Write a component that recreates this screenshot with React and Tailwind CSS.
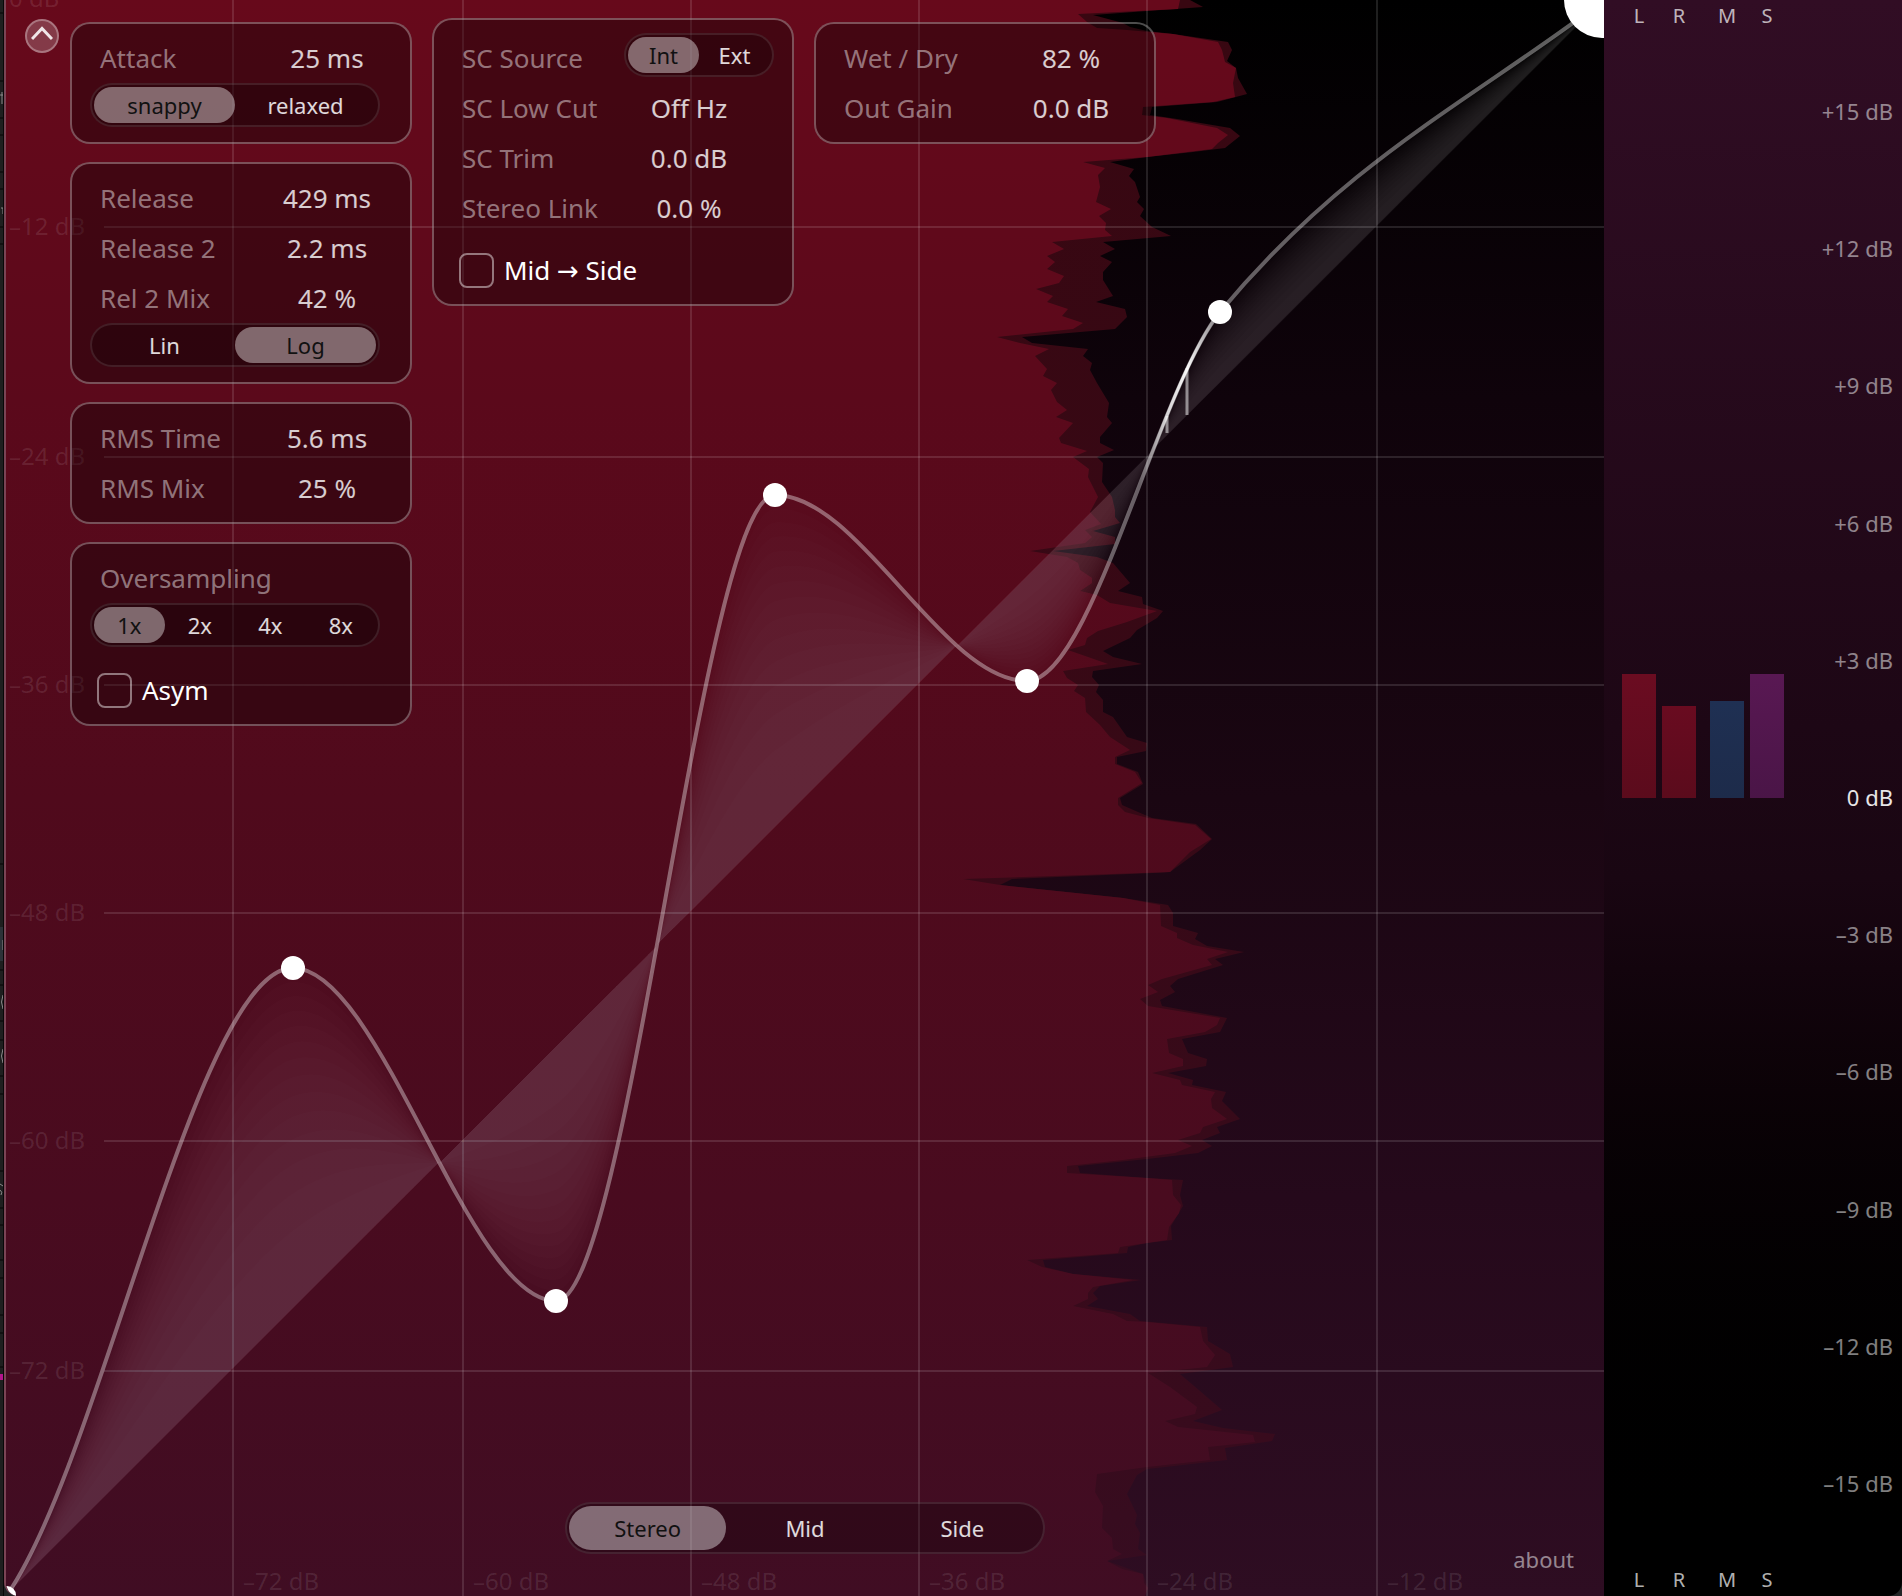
import { useState } from 'react'
import clsx from 'clsx'

const columns = [233, 463, 691, 919, 1147, 1377]
const rows = [227, 457, 685, 913, 1141, 1371]
const gridLabels = ['–12 dB', '–24 dB', '–36 dB', '–48 dB', '–60 dB', '–72 dB']

const curve =
  'M9 1592 C104 1450 198 968 293 968 C381 968 468 1301 556 1301 C629 1301 702 495 775 495 C859 495 943 681 1027 681 C1091 681 1156 392 1220 312 C1348 158 1476 98 1604 0'

// Copies of the curve pulled step by step towards the unity line y = 1602 - x,
// stacked so the fill grows denser the closer it gets to that line.
const FILL_STEPS = 14
const fillLayers = Array.from({ length: FILL_STEPS }, (_, i) => {
  const k = Math.pow(1 - i / FILL_STEPS, 1 / 1.8)
  return `matrix(1 ${k - 1} 0 ${k} 0 ${(1 - k) * 1602})`
})

const handles = [
  [293, 968],
  [556, 1301],
  [775, 495],
  [1027, 681],
  [1220, 312],
]

const rmsHistory =
  '1180,0 1178,9 1078,14 1087,22 1097,28 1127,30 1173,34 1218,42 1222,50 1225,62 1236,68 1233,83 1235,97 1213,102 1143,107 1142,115 1167,118 1217,128 1228,135 1218,143 1212,149 1147,157 1083,162 1105,168 1098,175 1100,187 1096,202 1111,209 1099,216 1106,223 1105,230 1112,236 1052,242 1064,249 1047,256 1055,262 1047,269 1064,276 1059,283 1036,289 1053,296 1047,302 1068,309 1062,316 1083,323 1073,329 997,337 1020,343 1049,349 1035,356 1047,369 1043,376 1057,383 1051,390 1057,402 ' +
  '1067,410 1056,417 1073,423 1059,438 1061,443 1087,451 1073,457 1089,469 1088,477 1098,497 1090,512 1101,524 1085,530 1092,537 1085,543 1030,551 1067,557 1078,563 1080,570 1092,578 1092,583 1080,591 1097,595 1110,603 1157,611 1127,622 1098,631 1087,638 1085,645 1068,650 1108,664 1063,671 1067,678 1078,685 1074,691 1085,698 1086,712 1100,725 1110,737 1130,750 1115,757 1115,764 1135,772 1142,783 1118,798 1118,805 1125,812 1148,818 1195,825 1211,839 1190,852 1170,872 1083,875 963,879 1000,885 ' +
  '1123,898 1160,905 1161,926 1177,933 1177,938 1193,945 1228,952 1207,959 1212,965 1162,979 1148,985 1158,992 1140,999 1148,1006 1220,1018 1217,1025 1205,1032 1167,1039 1169,1053 1183,1059 1183,1066 1152,1073 1180,1080 1182,1085 1215,1092 1211,1099 1212,1108 1227,1119 1203,1127 1200,1133 1178,1140 1192,1146 1175,1153 1123,1160 1067,1166 1067,1173 1147,1178 1172,1180 1173,1195 1181,1205 1179,1213 1169,1227 1167,1240 1120,1247 1118,1253 1027,1260 1042,1267 1073,1274 1133,1280 1093,1287 1088,1293 1088,1299 1073,1306 1113,1314 1127,1321 1147,1322 1200,1327 1203,1341 1215,1355 1207,1367 1148,1373 1170,1387 1197,1407 1195,1414 1165,1421 1178,1427 1253,1435 1255,1442 1208,1447 1210,1460 1147,1467 1097,1474 1095,1492 1103,1506 1102,1528 1112,1538 1113,1549 1122,1554 1107,1561 1122,1569 1143,1574 1144,1583 1148,1588 1145,1596'

const peakHistory =
  '1190,0 1203,7 1147,11 1093,15 1123,23 1130,27 1147,31 1173,34 1228,42 1232,50 1227,61 1236,68 1238,78 1247,94 1217,102 1152,107 1150,115 1177,119 1230,128 1240,136 1225,148 1193,152 1147,157 1110,162 1134,169 1129,176 1135,182 1140,197 1137,202 1144,209 1140,216 1152,227 1171,236 1103,242 1115,249 1100,256 1112,262 1103,272 1103,280 1113,296 1096,302 1125,309 1127,317 1115,329 1022,337 1032,343 1088,349 1083,356 1092,363 1090,370 1097,383 1109,403 ' +
  '1107,417 1112,423 1100,437 1100,443 1114,450 1097,457 1103,463 1102,482 1112,497 1115,510 1115,517 1120,523 1093,531 1115,537 1115,544 1053,551 1097,557 1113,563 1130,583 1118,591 1142,597 1143,604 1163,611 1157,618 1137,630 1130,638 1103,651 1113,657 1142,664 1093,671 1092,677 1099,685 1096,692 1103,700 1103,712 1113,717 1127,737 1147,743 1146,751 1117,757 1117,764 1138,772 1143,784 1120,798 1122,805 1138,812 1152,818 1196,824 1212,839 1200,850 1170,872 1153,873 1012,879 1000,885 ' +
  '1123,898 1168,905 1173,913 1173,926 1198,933 1195,939 1207,946 1244,952 1215,959 1223,965 1178,979 1170,986 1175,992 1160,1000 1162,1006 1227,1018 1220,1032 1182,1039 1188,1053 1207,1059 1206,1066 1168,1073 1193,1080 1192,1085 1226,1092 1222,1101 1240,1119 1217,1127 1220,1133 1202,1140 1212,1146 1198,1153 1147,1159 1078,1166 1080,1173 1147,1178 1183,1180 1180,1195 1183,1206 1171,1226 1172,1240 1147,1243 1128,1247 1127,1253 1043,1260 1045,1267 1073,1274 1141,1280 1100,1286 1093,1293 1098,1299 1087,1306 1130,1314 1140,1321 1207,1327 1208,1341 1230,1354 1233,1367 1180,1374 1200,1391 1222,1410 1193,1421 1223,1428 1275,1434 1272,1441 1225,1448 1227,1460 1147,1469 1137,1475 1127,1494 1137,1515 1135,1524 1140,1533 1138,1549 1147,1555 1107,1561 1143,1574 1148,1588 1145,1596'

function Graph() {
  return (
    <svg
      className="absolute inset-0 h-full w-full"
      viewBox="6 0 1598 1596"
      preserveAspectRatio="none"
      aria-hidden="true"
    >
      <defs>
        <linearGradient id="back" x1="0" y1="0" x2="0" y2="1">
          <stop offset="0" stopColor="#000000" />
          <stop offset="0.25" stopColor="#0f030b" />
          <stop offset="0.5" stopColor="#1a0612" />
          <stop offset="0.75" stopColor="#25091b" />
          <stop offset="1" stopColor="#2e0d22" />
        </linearGradient>
        <linearGradient id="peak" gradientUnits="userSpaceOnUse" x1="0" y1="0" x2="0" y2="1596">
          <stop offset="0" stopColor="#380711" />
          <stop offset="0.5" stopColor="#370916" />
          <stop offset="0.9" stopColor="#380b1d" />
          <stop offset="1" stopColor="#360d21" />
        </linearGradient>
        <linearGradient id="rms" gradientUnits="userSpaceOnUse" x1="0" y1="0" x2="0" y2="1596">
          <stop offset="0" stopColor="#67091b" />
          <stop offset="0.25" stopColor="#5b091b" />
          <stop offset="0.5" stopColor="#500a1c" />
          <stop offset="0.75" stopColor="#490b1f" />
          <stop offset="1" stopColor="#400d23" />
        </linearGradient>
        <linearGradient id="active" gradientUnits="userSpaceOnUse" x1="1140" y1="0" x2="1222" y2="0">
          <stop offset="0" stopColor="#fff" stopOpacity="0" />
          <stop offset="0.3" stopColor="#fff" stopOpacity="0.7" />
          <stop offset="0.58" stopColor="#fff" stopOpacity="0.95" />
          <stop offset="1" stopColor="#fff" stopOpacity="0.1" />
        </linearGradient>
      </defs>

      <rect x="6" width="1598" height="1596" fill="url(#back)" />
      <polygon points={`6,0 ${peakHistory} 6,1596`} fill="url(#peak)" />
      <polygon points={`6,0 ${rmsHistory} 6,1596`} fill="url(#rms)" />

      <g fill="#fff" fillOpacity="0.12">
        {columns.map((x) => (
          <rect key={x} x={x - 1} width="2" height="1596" />
        ))}
        {rows.map((y) => (
          <rect key={y} x="104" y={y - 1} width="1500" height="2" />
        ))}
      </g>

      <g fill="#fff" fillOpacity="0.1" className="text-[24px]">
        <text x="9" y="7">0 dB</text>
        {rows.map((y, i) => (
          <text key={y} x="9" y={y + 8}>{gridLabels[i]}</text>
        ))}
        {columns.map((x, i) => (
          <text key={x} x={x + 10} y="1590">{gridLabels[5 - i]}</text>
        ))}
      </g>

      <g fill="#d8e4dc" fillOpacity="0.01">
        {fillLayers.map((matrix) => (
          <path key={matrix} d={`${curve} Z`} transform={matrix} />
        ))}
      </g>
      <path d={curve} fill="none" stroke="#fff" strokeOpacity="0.37" strokeWidth="4" />
      <path d="M1167 416 V433 M1187 368 V415" stroke="#fff" strokeOpacity="0.5" strokeWidth="3" />
      <path
        d="M1027 681 C1091 681 1156 392 1220 312"
        fill="none"
        stroke="url(#active)"
        strokeWidth="3"
      />

      <g fill="#fff">
        {handles.map(([x, y]) => (
          <circle key={x} cx={x} cy={y} r="12" />
        ))}
        <circle cx="1602" cy="0" r="38" />
        <circle cx="7" cy="1595" r="9" />
      </g>
    </svg>
  )
}

function Segmented({ label, options, initial, className, buttonClass = 'h-9' }) {
  const [selected, setSelected] = useState(initial)
  return (
    <div
      role="group"
      aria-label={label}
      className={clsx('flex rounded-full border-2 border-white/10 bg-black/25 p-0.5', className)}
    >
      {options.map((option) => (
        <button
          key={option}
          type="button"
          aria-pressed={option === selected}
          onClick={() => setSelected(option)}
          className={clsx(
            'flex flex-1 items-center justify-center rounded-full text-[22px]',
            buttonClass,
            option === selected ? 'bg-white/40 text-[#111]' : 'text-white/85',
          )}
        >
          {option}
        </button>
      ))}
    </div>
  )
}

function Panel({ className, children }) {
  return (
    <section className={clsx('rounded-[20px] border-2 border-white/30 bg-black/33 pl-[18px]', className)}>
      {children}
    </section>
  )
}

function Param({ name, value }) {
  return (
    <div className="flex h-[50px] w-[290px] items-center justify-between pl-2.5 text-[26px]">
      <span className="whitespace-nowrap text-white/45">{name}</span>
      <span className="w-[106px] whitespace-nowrap text-center text-white/80">{value}</span>
    </div>
  )
}

function Check({ label, className }) {
  return (
    <label className={clsx('flex h-[35px] items-center gap-2.5 pl-[7px] text-[26px] text-white', className)}>
      <input
        type="checkbox"
        className="size-[35px] appearance-none rounded-lg border-2 border-white/45 checked:bg-white/40"
      />
      {label}
    </label>
  )
}

const channels = [
  { name: 'L', gain: 2.71, color: 'bg-linear-to-b from-[#6b0c21] to-[#5b0b1c]' },
  { name: 'R', gain: 2.01, color: 'bg-linear-to-b from-[#690b20] to-[#5b0b1c]', gap: 'ml-1.5' },
  { name: 'M', gain: 2.12, color: 'bg-linear-to-b from-[#1f3053] to-[#1d2b4a]', gap: 'ml-3.5' },
  { name: 'S', gain: 2.71, color: 'bg-linear-to-b from-[#591853] to-[#4a1547]', gap: 'ml-1.5' },
]

// decibels covered by one half of a meter
const METER_RANGE = 16.75

const scale = ['+15', '+12', '+9', '+6', '+3', '0', '–3', '–6', '–9', '–12', '–15']

function Meters() {
  return (
    <aside className="flex w-[298px] shrink-0 justify-between rounded-br-[14px] bg-linear-to-b from-[#310d24] via-[#190612] via-55% to-black pr-[9px] pl-[18px]">
      <div className="flex">
        {channels.map((ch) => (
          <div key={ch.name} className={clsx('flex w-[34px] flex-col text-center text-xl leading-8 text-white/70', ch.gap)}>
            <span>{ch.name}</span>
            <div className="flex flex-1 flex-col justify-end">
              <div className={ch.color} style={{ height: `${(ch.gain / METER_RANGE) * 100}%` }} />
            </div>
            <div className="flex-1" />
            <span>{ch.name}</span>
          </div>
        ))}
      </div>
      <div className="flex flex-col justify-between pt-[98px] pb-[100px] text-right text-[22px] leading-[26px]">
        {scale.map((db) => (
          <span key={db} className={db === '0' ? 'text-white/90' : 'text-white/50'}>{db} dB</span>
        ))}
      </div>
    </aside>
  )
}

function EdgeStrip() {
  return (
    <svg className="absolute top-0 left-0 h-full w-1" viewBox="0 0 4 1596" preserveAspectRatio="none" aria-hidden="true">
      <rect width="4" height="1596" fill="#1e1f1f" />
      <rect y="927" width="3" height="34" fill="#2c3238" />
      <path
        d="M0 13h3M0 81h3M0 118h3M0 135h3M0 172h3M0 189h3M0 227h3M0 244h3M0 864h3M0 970h3M0 985h3M0 1021h3M0 1040h3M0 1076h3M0 1094h3M0 1171h3M0 1208h3M0 1225h3M0 1260h3M0 1278h3M0 1315h3M0 1333h3M0 1367h3"
        stroke="#111"
        strokeWidth="2"
      />
      <path
        d="M0 95h3M2 92v12M1 208h2v6M3 940v10M3 995q-3 7 0 14M3 1049q-3 7 0 14M0 1184l3 2M0 1190q3 2 1 5"
        fill="none"
        stroke="#8a8a8a"
        strokeWidth="1"
      />
      <rect y="1374" width="3" height="6" fill="#b5148c" />
      <rect x="3" width="1" height="1596" fill="#080808" />
    </svg>
  )
}

export default function App() {
  const [open, setOpen] = useState(true)

  return (
    <div className="relative flex min-h-screen bg-[#222526] pl-1 font-['Noto_Sans','DejaVu_Sans',sans-serif]">
      <EdgeStrip />
      <main className="relative flex min-w-0 flex-1 flex-col justify-between overflow-hidden rounded-bl-[14px] border-l-2 border-[#7a4455] bg-[#400c22]">
        <Graph />

        <div className="relative flex items-start pt-[18px] pl-[19px]">
          <button
            type="button"
            aria-label="Toggle controls"
            aria-expanded={open}
            onClick={() => setOpen(!open)}
            className="mt-px mr-[11px] flex size-[34px] shrink-0 items-center justify-center rounded-full border-2 border-white/30 bg-white/20"
          >
            <svg className="size-[22px] shrink-0" viewBox="0 0 22 22" fill="none" stroke="#f0e6e8" strokeWidth="3">
              <path d="M1 14 L11 3.500 L21 14" />
            </svg>
          </button>

          {open && (
            <div className="flex items-start gap-5">
              <div className="flex w-[342px] flex-col gap-[18px] pt-1">
                <Panel className="pt-[9px] pb-[15px]">
                  <Param name="Attack" value="25 ms" />
                  <Segmented label="Attack mode" options={['snappy', 'relaxed']} initial="snappy" className="w-[290px]" />
                </Panel>
                <Panel className="pt-[9px] pb-[15px]">
                  <Param name="Release" value="429 ms" />
                  <Param name="Release 2" value="2.2 ms" />
                  <Param name="Rel 2 Mix" value="42 %" />
                  <Segmented label="Release mode" options={['Lin', 'Log']} initial="Log" className="w-[290px]" />
                </Panel>
                <Panel className="py-[9px]">
                  <Param name="RMS Time" value="5.6 ms" />
                  <Param name="RMS Mix" value="25 %" />
                </Panel>
                <Panel className="pt-[9px] pb-4">
                  <Param name="Oversampling" />
                  <Segmented label="Oversampling" options={['1x', '2x', '4x', '8x']} initial="1x" className="w-[290px]" />
                  <Check label="Asym" className="mt-[26px]" />
                </Panel>
              </div>

              <Panel className="w-[362px] pt-[13px] pr-[18px] pb-4">
                <div className="flex h-[50px] items-start justify-between">
                  <span className="pl-2.5 text-[26px] leading-[50px] text-white/45">SC Source</span>
                  <Segmented label="SC Source" options={['Int', 'Ext']} initial="Int" className="w-[150px]" />
                </div>
                <Param name="SC Low Cut" value="Off Hz" />
                <Param name="SC Trim" value="0.0 dB" />
                <Param name="Stereo Link" value="0.0 %" />
                <Check label="Mid → Side" className="mt-5" />
              </Panel>

              <div className="w-[342px] pt-1">
                <Panel className="py-[9px]">
                  <Param name="Wet / Dry" value="82 %" />
                  <Param name="Out Gain" value="0.0 dB" />
                </Panel>
              </div>
            </div>
          )}
        </div>

        <div className="relative grid grid-cols-[1fr_auto_1fr] items-end pb-[25px]">
          <Segmented
            label="Channel"
            options={['Stereo', 'Mid', 'Side']}
            initial="Stereo"
            className="col-start-2 mb-[17px] w-[480px]"
            buttonClass="h-11"
          />
          <a href="#about" className="justify-self-end pr-[30px] text-[22px] leading-6 text-white/50">
            about
          </a>
        </div>
      </main>
      <Meters />
    </div>
  )
}
